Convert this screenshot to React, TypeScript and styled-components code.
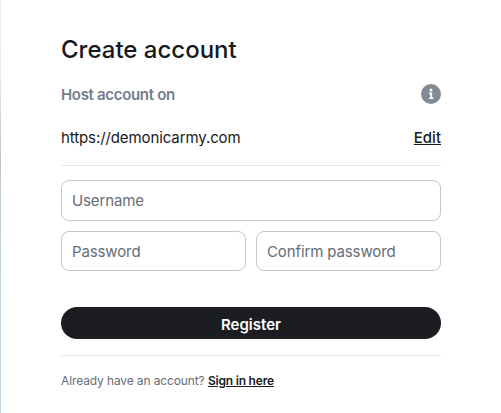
import React from "react";
import styled, { createGlobalStyle } from "styled-components";

const GlobalStyle = createGlobalStyle`
  * { box-sizing: border-box; }
  body { margin: 0; background: #fff; font-family: Inter, "Noto Sans", sans-serif; color: #17191c; }
`;

const Dialog = styled.main`
  width: 501px;
  height: 413px;
  padding: 35px 60px 0 61px;
  background: linear-gradient(#e9eff7 0, #e5e9f0 80px, #d3d3d8 120px, #bfc3c4 160px, #bdd0d8 200px, #c0d5df 413px) 0 0 / 1px 100% no-repeat #fff;
`;

const Title = styled.h1`
  margin: 0;
  font-size: 24px;
  font-weight: 500;
  line-height: 30px;
`;

const Row = styled.div<{ $top: number }>`
  display: flex;
  justify-content: space-between;
  align-items: center;
  height: 20px;
  margin-top: ${(p) => p.$top}px;
  font-size: 15px;
`;

const Label = styled.h2`
  margin: 0;
  font-size: 15px;
  font-weight: 600;
  letter-spacing: -0.32px;
  color: #737d8c;
`;

const Host = styled.span`
  letter-spacing: -0.1px;
`;

const Edit = styled.a`
  font-weight: 500;
  text-decoration: underline;
  text-decoration-skip-ink: none;
`;

const Divider = styled.hr<{ $top: number }>`
  height: 1px;
  margin: ${(p) => p.$top}px 0 0;
  border: 0;
  background: #e7e7e7;
`;

const Fields = styled.form`
  display: grid;
  grid-template-columns: 185px 185px;
  grid-template-rows: 41px 40px;
  gap: 10px;
  margin-top: 14px;
`;

const Input = styled.input<{ $wide?: boolean }>`
  grid-column: ${(p) => (p.$wide ? "1 / -1" : "auto")};
  width: 100%;
  min-width: 0;
  padding: 0 10px;
  border: 1px solid #c1c6cf;
  border-radius: 8px;
  background: #fff;
  font: 400 15px Inter, sans-serif;
  letter-spacing: -0.12px;
  &::placeholder { color: #656d77; opacity: 1; }
`;

const Submit = styled.button`
  display: block;
  width: 100%;
  height: 32px;
  margin-top: 36px;
  padding: 2px 0 0;
  border: 0;
  border-radius: 16px;
  background: #1b1d22;
  color: #fff;
  font: 600 15px Inter, sans-serif;
`;

const Footer = styled.p`
  margin: 16px 0 0;
  font-size: 12px;
  line-height: 18px;
  letter-spacing: -0.12px;
  color: #656d77;
`;

const SignIn = styled.a`
  font-weight: 600;
  letter-spacing: -0.2px;
  color: #17191c;
  text-decoration: underline;
`;

const InfoIcon = () => (
  <svg width="20" height="20" viewBox="0 0 20 20">
    <circle cx="10" cy="10" r="10" fill="#818a95" />
    <circle cx="10" cy="6" r="1.5" fill="#fff" />
    <path d="M8 8.5h3.2v5H12.5v1.5H8.2v-1.5h1V10H8z" fill="#fff" />
  </svg>
);

export default function App() {
  return (
    <Dialog>
      <GlobalStyle />
      <Title>Create account</Title>
      <Row $top={19}>
        <Label>Host account on</Label>
        <InfoIcon />
      </Row>
      <Row $top={23}>
        <Host>https://demonicarmy.com</Host>
        <Edit>Edit</Edit>
      </Row>
      <Divider $top={18} />
      <Fields>
        <Input $wide placeholder="Username" />
        <Input type="password" placeholder="Password" />
        <Input type="password" placeholder="Confirm password" />
      </Fields>
      <Submit>Register</Submit>
      <Divider $top={16} />
      <Footer>
        Already have an account? <SignIn>Sign in here</SignIn>
      </Footer>
    </Dialog>
  );
}
